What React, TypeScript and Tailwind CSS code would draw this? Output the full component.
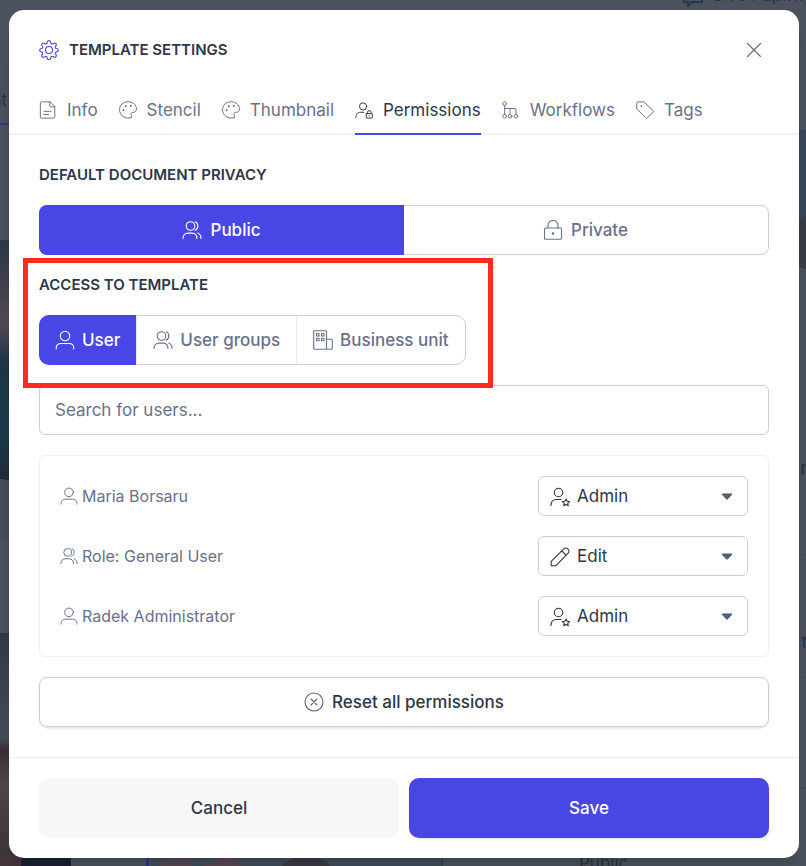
import { useState } from "react";
import type { ReactNode } from "react";

interface IconProps {
  className?: string;
}

interface IconBaseProps extends IconProps {
  children: ReactNode;
}

// All icons are drawn on a 20x20 grid with a thin stroke
function Icon({ className = "w-5 h-5", children }: IconBaseProps) {
  return (
    <svg
      className={`shrink-0 ${className}`}
      viewBox="0 0 20 20"
      fill="none"
      stroke="currentColor"
      strokeWidth="1.1"
      strokeLinecap="round"
      strokeLinejoin="round"
      aria-hidden="true"
    >
      {children}
    </svg>
  );
}

const GearIcon = ({ className }: IconProps) => (
  <Icon className={className}>
    <circle cx="10" cy="10" r="3.5" />
    <path d="M8.4 1.900a1.650 1.650 0 0 1 3.200 0l.3 1.100a1.400 1.400 0 0 0 2 .8l1-.5a1.600 1.600 0 0 1 2.200 2.200l-.6 1a1.400 1.400 0 0 0 .8 2l1 .2a1.600 1.600 0 0 1 0 3l-1 .2a1.400 1.400 0 0 0-.8 2l.6 1a1.600 1.600 0 0 1-2.200 2.200l-1-.5a1.400 1.400 0 0 0-2 .8l-.3 1.100a1.650 1.650 0 0 1-3.200 0l-.3-1.100a1.400 1.400 0 0 0-2-.8l-1 .5a1.600 1.600 0 0 1-2.200-2.200l.6-1a1.400 1.400 0 0 0-.8-2l-1-.2a1.600 1.600 0 0 1 0-3l1-.2a1.400 1.400 0 0 0 .8-2l-.6-1a1.600 1.600 0 0 1 2.200-2.200l1 .5a1.400 1.400 0 0 0 2-.8z" />
  </Icon>
);

const FileIcon = ({ className }: IconProps) => (
  <Icon className={className}>
    <path d="M12 1H2.500a1 1 0 0 0-1 1v16a1 1 0 0 0 1 1h14a1 1 0 0 0 1-1V6.500zM12 1v4.500a1 1 0 0 0 1 1h4.500M5.500 11.500h8M5.500 15h5" />
  </Icon>
);

const PaletteIcon = ({ className }: IconProps) => (
  <Icon className={className}>
    <path d="M13.500 18.400c-7 2.400-12.900-2.700-12.900-8.700C.6 4.600 4.700.8 9.900.8c5.300 0 9.500 3.600 9.500 7.800 0 3.300-2.100 4.200-4.100 4-1.700-.1-2.500 1.300-1.900 2.700.5 1.200 1.300 2.600.1 3.100z" />
    <circle cx="4.900" cy="10.200" r=".6" fill="currentColor" />
    <circle cx="7.300" cy="5.700" r=".6" fill="currentColor" />
    <circle cx="13" cy="5.500" r=".6" fill="currentColor" />
  </Icon>
);

const UserIcon = ({ className }: IconProps) => (
  <Icon className={className}>
    <circle cx="10" cy="6" r="4.800" />
    <path d="M1.200 19v-.8c0-3 2.300-4.700 5-4.700h7.600c2.700 0 5 1.700 5 4.700v.8" />
  </Icon>
);

const UsersIcon = ({ className }: IconProps) => (
  <Icon className={className}>
    <circle cx="8.500" cy="6" r="4.300" />
    <path d="M1 18.500c0-3.600 2.200-5.400 5-5.400h4c3.400 0 5 2 5 5.400M13.200 1.700c3.500 1.200 3.500 7.400-.2 8.600M15.800 13.100c2.100.8 3.200 2.600 3.200 5.400" />
  </Icon>
);

const UserLockIcon = ({ className }: IconProps) => (
  <Icon className={className}>
    <circle cx="9" cy="6" r="4" />
    <path d="M1 18.500c0-4 2-6 5.500-6H10" />
    <rect x="12.500" y="14" width="6.800" height="5" rx=".5" />
    <path d="M14 14v-1.500a1.900 1.900 0 0 1 3.800 0V14M15.900 16.200v.5" />
  </Icon>
);

const UserStarIcon = ({ className }: IconProps) => (
  <Icon className={className}>
    <circle cx="8.500" cy="5.500" r="4.200" />
    <path d="M1 18.500c0-4 2-6 5.500-6H11" />
    <path d="m16 12 1.100 2.300 2.500.3-1.900 1.700.6 2.500-2.300-1.200-2.300 1.200.6-2.500-1.900-1.700 2.500-.3z" />
  </Icon>
);

const WorkflowIcon = ({ className }: IconProps) => (
  <Icon className={className}>
    <circle cx="3" cy="3" r="2" />
    <circle cx="3" cy="17" r="2" />
    <circle cx="9" cy="17" r="2" />
    <circle cx="15.500" cy="17" r="2" />
    <path d="M3 5v10M3 8.300h11.500a1 1 0 0 1 1 1V15M9 8.300V15" />
  </Icon>
);

const TagIcon = ({ className }: IconProps) => (
  <Icon className={className}>
    <path d="M1 2a1 1 0 0 1 1-1h6.700L19 10.800a1.200 1.200 0 0 1 0 1.700l-6.400 6.200a1.200 1.200 0 0 1-1.700 0L1 9z" />
    <circle cx="5.800" cy="5.500" r=".4" fill="currentColor" />
  </Icon>
);

const LockIcon = ({ className }: IconProps) => (
  <Icon className={className}>
    <rect x="1.500" y="8" width="17" height="11.300" rx="1" />
    <path d="M5 8V5.500a5 5 0 0 1 10 0V8" />
    <circle cx="10" cy="13.500" r=".7" fill="currentColor" />
  </Icon>
);

const BuildingIcon = ({ className }: IconProps) => (
  <Icon className={className}>
    <path d="M13.500 19.300H1.700a1 1 0 0 1-1-1V1.700a1 1 0 0 1 1-1h10.800a1 1 0 0 1 1 1zM13.500 9.300h4.800a1 1 0 0 1 1 1v8a1 1 0 0 1-1 1h-4.800" />
    <path d="M3.500 3.500H6V6H3.500zM8.500 3.500H11V6H8.500zM3.500 8.300H6v2.500H3.500zM8.500 8.300H11v2.500H8.500z" />
  </Icon>
);

const PencilIcon = ({ className }: IconProps) => (
  <Icon className={className}>
    <path d="M1.200 18.800v-4.500L13.800 1.900a2.700 2.700 0 0 1 3.900 0l.4.400a2.700 2.700 0 0 1 0 3.900L5.700 18.800zM11.800 3.900l4.300 4.300" />
  </Icon>
);

const ResetIcon = ({ className }: IconProps) => (
  <Icon className={className}>
    <circle cx="10" cy="10" r="9" />
    <path d="m7 7 6 6M13 7l-6 6" />
  </Icon>
);

const CloseIcon = ({ className }: IconProps) => (
  <Icon className={className}>
    <path d="m3.500 3.500 13 13M16.500 3.500l-13 13" />
  </Icon>
);

const tabs = [
  { id: "info", label: "Info", icon: FileIcon },
  { id: "stencil", label: "Stencil", icon: PaletteIcon },
  { id: "thumbnail", label: "Thumbnail", icon: PaletteIcon },
  { id: "permissions", label: "Permissions", icon: UserLockIcon },
  { id: "workflows", label: "Workflows", icon: WorkflowIcon },
  { id: "tags", label: "Tags", icon: TagIcon },
];

const accessTypes = [
  { id: "user", label: "User", icon: UserIcon },
  { id: "groups", label: "User groups", icon: UsersIcon },
  { id: "unit", label: "Business unit", icon: BuildingIcon },
];

const initialMembers = [
  { id: "maria", name: "Maria Borsaru", icon: UserIcon, role: "Admin" },
  { id: "general", name: "Role: General User", icon: UsersIcon, role: "Edit" },
  { id: "radek", name: "Radek Administrator", icon: UserIcon, role: "Admin" },
];

// Dimmed template library behind the dialog
function Backdrop() {
  return (
    <div className="absolute inset-0 overflow-hidden bg-[#4b525d] text-[#2b323d]" aria-hidden="true">
      <svg className="w-full h-full" viewBox="0 0 806 866" preserveAspectRatio="none">
        <defs>
          <linearGradient id="sky" x1="0" y1="0" x2="0" y2="1">
            <stop offset="0" stopColor="#2c3a48" />
            <stop offset="0.35" stopColor="#544955" />
            <stop offset="0.5" stopColor="#1f3748" />
            <stop offset="0.8" stopColor="#193b4c" />
            <stop offset="1" stopColor="#242936" />
          </linearGradient>
          <linearGradient id="canyon" x1="0" y1="0" x2="0" y2="1">
            <stop offset="0" stopColor="#323b46" />
            <stop offset="0.45" stopColor="#454c58" />
            <stop offset="0.5" stopColor="#3c3039" />
            <stop offset="0.65" stopColor="#51464c" />
            <stop offset="1" stopColor="#3b3337" />
          </linearGradient>
        </defs>
        <path d="M0 28h806" stroke="#485059" />
        <path d="M0 124h12" stroke="#33348a" strokeWidth="2" />
        <path d="M0 240h20v242l-20-3z" fill="url(#sky)" />
        <path d="M0 479l20 3v56H0z" fill="#454d58" />
        <path d="M0 633h20v233H0z" fill="url(#canyon)" />
        <path d="M20 850h51v16H20z" fill="#1d2034" />
        <path d="M0 856c8-10 16-6 21 2v8H0z" fill="#45363a" />
        <path d="M146 850h3v16h-3z" fill="#30347c" />
        <path d="M151 850h290v16H151z" fill="#3f4c5b" />
        <path d="M160 866c6-9 14-4 18-7s10 0 14 7 14-5 20-4 8-5 16-4 10 5 14 8z" fill="#594653" />
        <path d="M282 866c6-12 40-12 48 0z" fill="#3b3a42" />
        <path d="M441 850h2v16h-2z" fill="#384453" />
        <path d="M790 130h16v90h-16z" fill="#37475a" />
        <path d="M790 226l16-11v55l-16-8z" fill="#3a3d46" />
        <path d="M798 555h8M798 677h8M798 788h8" stroke="#414852" />
      </svg>
      <span className="absolute -left-2 top-[87px] leading-[26px]">at</span>
      <span className="absolute right-[-5px] top-[455px] leading-[26px] font-semibold">n</span>
      <span className="absolute right-[-1px] top-[629px] leading-[26px]">t</span>
      <span className="absolute left-[579px] bottom-[-10px] leading-[26px]">Public</span>
      <div className="absolute left-[683px] -top-[18px] flex items-center gap-2 leading-[26px] text-[#20384d] whitespace-nowrap">
        <svg className="w-5 h-5 mt-1" viewBox="0 0 20 20" fill="none" stroke="currentColor" strokeWidth="2">
          <path d="M1 3h18v12H9l-4 4v-4H1z" />
        </svg>
        Give Papirfly
      </div>
    </div>
  );
}

function SelectCaret() {
  return (
    <svg
      className="absolute right-[15px] top-[17px] w-3 h-2 pointer-events-none"
      viewBox="0 0 12 8"
      aria-hidden="true"
    >
      <path d="M1.500.5h9a.7.700 0 0 1 .5 1.200L6.800 6.200a1.100 1.100 0 0 1-1.600 0L1 1.700A.7.700 0 0 1 1.500.5z" fill="#4f6072" />
    </svg>
  );
}

export default function App() {
  const [activeTab, setActiveTab] = useState("permissions");
  const [privacy, setPrivacy] = useState("public");
  const [access, setAccess] = useState("user");
  const [search, setSearch] = useState("");
  const [members, setMembers] = useState(initialMembers);

  const setRole = (id: string, role: string) => {
    setMembers(members.map((m) => (m.id === id ? { ...m, role } : m)));
  };

  return (
    <div className="relative min-h-screen pl-[9px] pr-[7px] pt-[10px] pb-2 font-['Inter',sans-serif] text-[17px] leading-[26px] text-[#2d3748]">
      <Backdrop />

      <div
        role="dialog"
        aria-labelledby="dialog-title"
        className="relative max-w-[790px] mx-auto bg-white rounded-[15px] shadow-xl"
      >
        {/* Header */}
        <header className="px-[30px] pt-[30px] border-b-2 border-[#edf2f7]">
          <div className="flex items-center justify-between h-5">
            <div className="flex items-center gap-[10px]">
              <GearIcon className="w-5 h-5 text-[#4846e5]" />
              <h1 id="dialog-title" className="text-[15px] leading-5 font-semibold">TEMPLATE SETTINGS</h1>
            </div>
            <button type="button" aria-label="Close" className="w-[30px] h-5 flex items-center justify-center text-[#5f6984]">
              <CloseIcon />
            </button>
          </div>

          <div role="tablist" className="flex flex-wrap gap-x-[21px] mt-9 -mb-0.5">
            {tabs.map(({ id, label, icon: TabIcon }) => (
              <button
                key={id}
                type="button"
                role="tab"
                aria-selected={activeTab === id}
                onClick={() => setActiveTab(id)}
                className={`flex items-center gap-[10px] pt-px pb-[10px] border-b-2 ${
                  activeTab === id
                    ? "border-[#4846e5] text-[#2d3748]"
                    : "border-transparent text-[#68718b]"
                }`}
              >
                <TabIcon className="w-[18px] h-[18px]" />
                {label}
              </button>
            ))}
          </div>
        </header>

        <main className="p-[30px] space-y-5">
          {/* Privacy */}
          <section className="space-y-5">
            <h2 className="text-[15px] leading-5 font-semibold">DEFAULT DOCUMENT PRIVACY</h2>
            <div className="flex h-[50px] rounded-lg border border-[#c6cfda] font-medium">
              <button
                type="button"
                aria-pressed={privacy === "public"}
                onClick={() => setPrivacy("public")}
                className={`flex-1 -m-px flex items-center justify-center gap-2 rounded-l-lg ${
                  privacy === "public" ? "bg-[#4846e5] text-white" : "text-[#68718b]"
                }`}
              >
                <UsersIcon />
                Public
              </button>
              <button
                type="button"
                aria-pressed={privacy === "private"}
                onClick={() => setPrivacy("private")}
                className={`flex-1 -my-px flex items-center justify-center gap-2 rounded-r-lg ${
                  privacy === "private" ? "bg-[#4846e5] text-white" : "text-[#68718b]"
                }`}
              >
                <LockIcon />
                Private
              </button>
            </div>
          </section>

          {/* Access */}
          <section className="relative z-10 w-fit space-y-5">
            <h2 className="text-[15px] leading-5 font-semibold">ACCESS TO TEMPLATE</h2>
            <div className="flex h-[50px] rounded-[10px] border border-[#c6cfda] font-medium">
              {accessTypes.map(({ id, label, icon: TypeIcon }) => (
                <button
                  key={id}
                  type="button"
                  aria-pressed={access === id}
                  onClick={() => setAccess(id)}
                  className={`flex items-center gap-[7px] px-4 first:-ml-px first:rounded-l-[10px] last:rounded-r-[10px] ${
                    access === id
                      ? "-my-px bg-[#4846e5] text-white"
                      : "text-[#68718b] border-l border-[#e6ebf1]"
                  }`}
                >
                  <TypeIcon />
                  {label}
                </button>
              ))}
            </div>
            <div className="absolute -left-4 -right-[27px] -top-[17px] -bottom-[23px] border-5 border-[#fe2b20] pointer-events-none" />
          </section>

          <input
            type="text"
            aria-label="Search for users"
            placeholder="Search for users..."
            value={search}
            onChange={(e) => setSearch(e.target.value)}
            className="block w-full h-[50px] px-[15px] rounded-md border border-[#c6cfda] bg-white placeholder:text-[#68718b]"
          />

          {/* Members */}
          <ul className="p-5 space-y-5 rounded-md border border-[#edf0f5]">
            {members.map(({ id, name, icon: MemberIcon, role }) => {
              const RoleIcon = role === "Admin" ? UserStarIcon : PencilIcon;
              return (
                <li key={id} className="flex items-center justify-between">
                  <label htmlFor={id} className="flex items-center gap-1 text-[16px] text-[#68718b]">
                    <MemberIcon className="w-[18px] h-[18px]" />
                    {name}
                  </label>
                  <div className="relative w-[210px]">
                    <RoleIcon className="absolute left-[12px] top-[11px] w-5 h-5 pointer-events-none" />
                    <select
                      id={id}
                      value={role}
                      onChange={(e) => setRole(id, e.target.value)}
                      className="block appearance-none w-full h-10 pl-[38px] pr-8 rounded-md border border-[#c6d0dc] bg-white"
                    >
                      <option>Admin</option>
                      <option>Edit</option>
                    </select>
                    <SelectCaret />
                  </div>
                </li>
              );
            })}
          </ul>

          <button
            type="button"
            onClick={() => setMembers(initialMembers)}
            className="w-full h-[50px] flex items-center justify-center gap-2 rounded-lg border border-[#c6cfda] font-medium shadow-sm"
          >
            <ResetIcon className="w-5 h-5 text-[#566078]" />
            Reset all permissions
          </button>
        </main>

        {/* Footer */}
        <footer className="flex gap-[10px] px-[30px] py-5 border-t border-[#edf0f3] font-medium">
          <button type="button" className="flex-1 h-[60px] rounded-[10px] bg-[#f6f7f9]">
            Cancel
          </button>
          <button type="button" className="flex-1 h-[60px] rounded-[10px] bg-[#4846e5] text-white shadow-sm">
            Save
          </button>
        </footer>
      </div>
    </div>
  );
}
